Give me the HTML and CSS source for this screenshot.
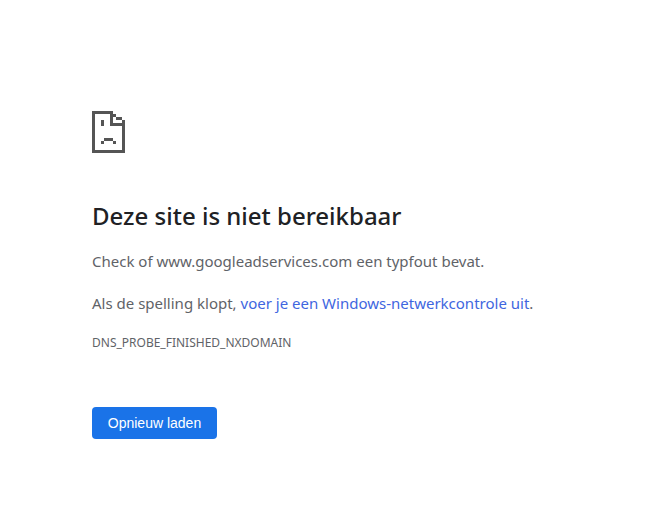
FILE: index.html
```html
<!DOCTYPE html>
<html lang="nl">
<head>
<meta charset="utf-8">
<title>Deze site is niet bereikbaar</title>
<link rel="stylesheet" href="styles.css">
</head>
<body>
<main class="error-page">
  <svg class="sad-icon" width="34" height="42" viewBox="0 0 34 42" shape-rendering="crispEdges" fill="#555" aria-hidden="true">
    <path d="M0 0H20V3H3V39H30V15H33V42H0Z"/>
    <path d="M18 0H21V12H33V15H18Z"/>
    <path d="M21 3H24V6H21ZM24 6H27V9H24ZM27 6H30V9H27ZM30 9H33V12H30Z"/>
    <path d="M9 9H12V15H9Z"/>
    <path d="M12 27H21V30H12ZM9 30H12V33H9ZM21 30H24V33H21Z"/>
  </svg>
  <h1 class="title">Deze site is niet bereikbaar</h1>
  <p class="message">Check of www.googleadservices.com een typfout bevat.</p>
  <p class="message">Als de spelling klopt, <a class="link" href="#">voer je een Windows-netwerkcontrole uit</a>.</p>
  <div class="code">DNS_PROBE_FINISHED_NXDOMAIN</div>
  <button class="reload" type="button">Opnieuw laden</button>
</main>
</body>
</html>
```

FILE: styles.css
```css
html, body {
  margin: 0;
  background: #fff;
}
body {
  font-family: "Noto Sans", "Open Sans", sans-serif;
  color: #646464;
}
.error-page {
  display: flex;
  flex-direction: column;
  align-items: flex-start;
  padding: 111px 0 0 92px;
}
.sad-icon {
  display: block;
}
.title {
  margin: 47px 0 0;
  font-size: 24px;
  line-height: 32px;
  font-weight: 500;
  color: #202124;
}
.message {
  margin: 17px 0 0;
  font-size: 15px;
  line-height: 25px;
  color: #5f6368;
}
.message + .message {
  margin-top: 17px;
}
.link {
  color: #4066e0;
  text-decoration: none;
}
.code {
  margin-top: 20px;
  font-size: 12px;
  line-height: 14px;
  color: #5f6368;
}
.reload {
  margin-top: 57px;
  width: 125px;
  height: 32px;
  padding: 0;
  border: 0;
  border-radius: 4px;
  background: #1a73e8;
  color: #fff;
  font-family: "Liberation Sans", Arial, sans-serif;
  font-size: 14px;
}
```
